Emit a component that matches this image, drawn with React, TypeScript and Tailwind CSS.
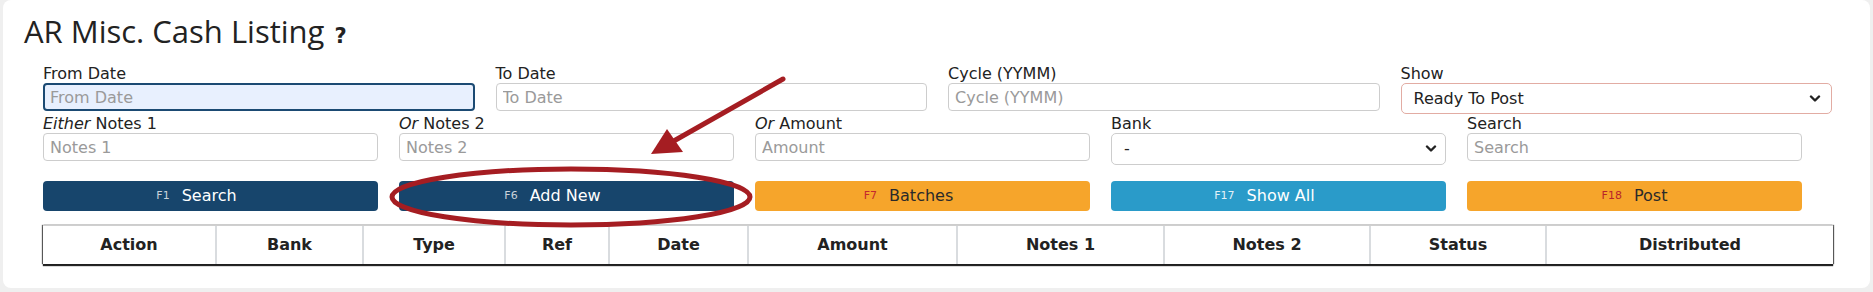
import { ReactNode } from 'react';

const Chevron = () => (
  <svg width="12" height="8" viewBox="0 0 12 8" className="shrink-0">
    <path d="M2 1.5 L6 5.5 L10 1.5" fill="none" stroke="#222" strokeWidth="2.4" strokeLinecap="round" strokeLinejoin="round" />
  </svg>
);

const Field = ({ label, children }: { label: ReactNode; children: ReactNode }) => (
  <div className="flex flex-col">
    <div className="h-[18px] text-[16px] leading-[18px] text-[#222] whitespace-nowrap">{label}</div>
    {children}
  </div>
);

const TextInput = ({ placeholder, focused }: { placeholder: string; focused?: boolean }) => (
  <input
    placeholder={placeholder}
    className={
      focused
        ? 'h-[28px] w-full rounded-[4px] border-2 border-[#1b4a73] bg-[#e8f0fe] px-[5px] text-[16px] text-[#222] outline-none placeholder:text-[#9a9a9a]'
        : 'h-[28px] w-full rounded-[4px] border border-[#cdcdcd] bg-white px-[6px] text-[16px] text-[#222] outline-none placeholder:text-[#9a9a9a]'
    }
  />
);

const KeyButton = ({ k, label, className, keyClass, labelClass, centered }: { k: string; label: string; className: string; keyClass: string; labelClass: string; centered?: boolean }) => (
  <button className={`flex h-[30px] items-center justify-center rounded-[4px] ${centered ? '' : 'pr-[28px]'} ${className}`}>
    <span className={`mr-[12px] text-[11px] ${keyClass}`}>{k}</span>
    <span className={`text-[16px] ${labelClass}`}>{label}</span>
  </button>
);

const columns = ['Action', 'Bank', 'Type', 'Ref', 'Date', 'Amount', 'Notes 1', 'Notes 2', 'Status', 'Distributed'];

export default function App() {
  return (
    <div className="relative h-[292px] w-[1873px] overflow-hidden bg-[#efefef] px-[3px] font-['DejaVu_Sans',sans-serif]">
      <div className="h-[288px] w-[1867px] rounded-[8px] bg-white">
        <div className="pl-[21px] pt-[13px]">
          <h1 className="h-[36px] whitespace-nowrap font-['Open_Sans',sans-serif] text-[31px] leading-[36px] text-[#222]">
            AR Misc. Cash Listing
            <span className="ml-[10px] font-['DejaVu_Sans',sans-serif] text-[21px] font-bold leading-none">?</span>
          </h1>
        </div>

        <div className="pl-[40px] pt-[16px]">
          <div className="grid w-[1789px] grid-cols-4 gap-x-[21px]">
            <Field label="From Date">
              <TextInput placeholder="From Date" focused />
            </Field>
            <Field label="To Date">
              <TextInput placeholder="To Date" />
            </Field>
            <Field label="Cycle (YYMM)">
              <TextInput placeholder="Cycle (YYMM)" />
            </Field>
            <Field label="Show">
              <div className="flex h-[31px] items-center justify-between rounded-[5px] border border-[#e2aca3] pl-[12px] pr-[10px] text-[16px] text-[#222]">
                <span>Ready To Post</span>
                <Chevron />
              </div>
            </Field>
          </div>

          <div className="mt-[1px] grid grid-cols-[repeat(5,335px)] gap-x-[21px]">
            <Field label={<><i>Either</i> Notes 1</>}>
              <TextInput placeholder="Notes 1" />
            </Field>
            <Field label={<><i>Or</i> Notes 2</>}>
              <TextInput placeholder="Notes 2" />
            </Field>
            <Field label={<><i>Or</i> Amount</>}>
              <TextInput placeholder="Amount" />
            </Field>
            <Field label="Bank">
              <div className="flex h-[32px] items-center justify-between rounded-[5px] border border-[#cdcdcd] pl-[12px] pr-[8px] text-[16px] text-[#222]">
                <span>-</span>
                <Chevron />
              </div>
            </Field>
            <Field label="Search">
              <TextInput placeholder="Search" />
            </Field>
          </div>

          <div className="mt-[16px] grid grid-cols-[repeat(5,335px)] gap-x-[21px]">
            <KeyButton k="F1" label="Search" className="bg-[#17456c]" keyClass="text-[#c9d2db]" labelClass="text-white" />
            <KeyButton k="F6" label="Add New" className="bg-[#17456c]" keyClass="text-[#c9d2db]" labelClass="text-white" />
            <KeyButton k="F7" label="Batches" className="bg-[#f6a52b]" keyClass="text-[#c3282e]" labelClass="text-[#2a2a2a]" />
            <KeyButton k="F17" label="Show All" className="bg-[#2a9bc9]" keyClass="text-[#e3f1f8]" labelClass="text-white" />
            <KeyButton k="F18" label="Post" className="bg-[#f6a52b]" keyClass="text-[#b8242a]" labelClass="text-[#2a2a2a]" centered />
          </div>

          <div className="mt-[14px] grid h-[39px] w-[1790px] grid-cols-[174px_147px_142px_104px_139px_209px_207px_206px_176px_286px] border-t border-[#cfcfcf] bg-white shadow-[0_2px_1px_rgba(0,0,0,0.85),-1px_0_1px_rgba(0,0,0,0.6),1px_0_1px_rgba(0,0,0,0.6)]">
            {columns.map((c, i) => (
              <div
                key={c}
                className={`flex items-center justify-center text-[16px] font-bold text-[#222] ${i < columns.length - 1 ? 'border-r-2 border-[#d9dcdf]' : ''}`}
              >
                {c}
              </div>
            ))}
          </div>
        </div>
      </div>

      <svg className="pointer-events-none absolute left-0 top-0" width="1873" height="292" viewBox="0 0 1873 292">
        <line x1="783" y1="79" x2="672" y2="142" stroke="#a51d22" strokeWidth="5" strokeLinecap="round" />
        <polygon points="651,154 667,129 683,152" fill="#a51d22" />
        <ellipse cx="571" cy="197" rx="179" ry="28" fill="none" stroke="#a51d22" strokeWidth="5" />
      </svg>
    </div>
  );
}
